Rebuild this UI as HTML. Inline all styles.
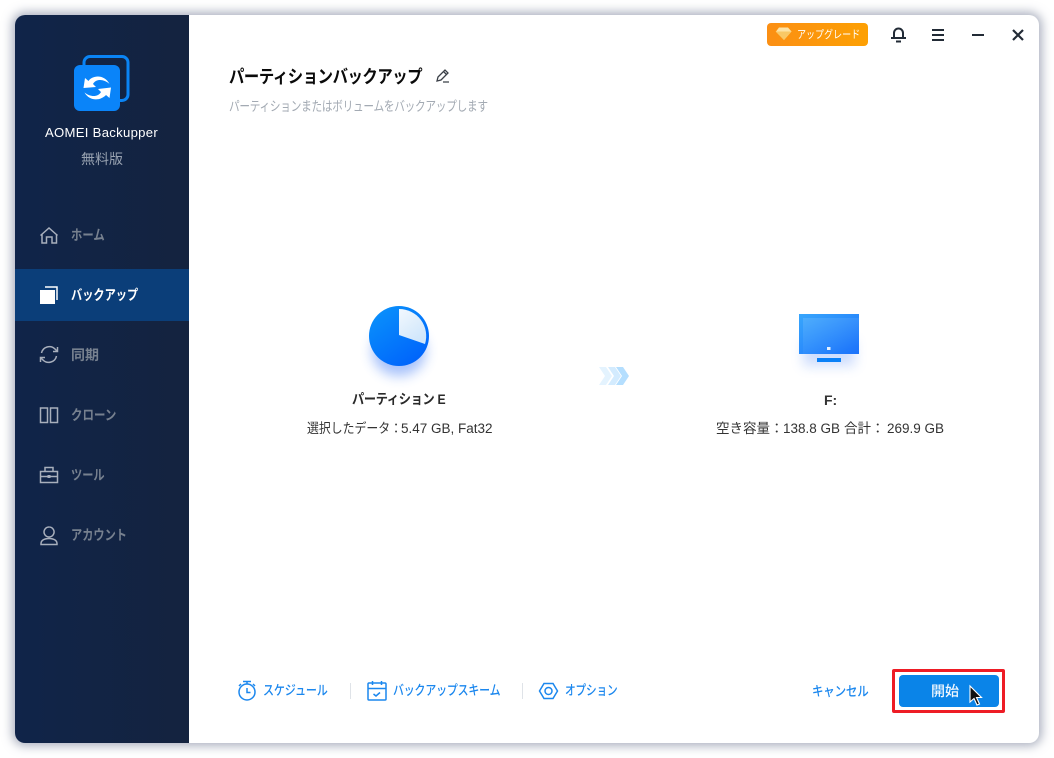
<!DOCTYPE html>
<html lang="ja"><head><meta charset="utf-8"><title>AOMEI Backupper</title>
<style>
html,body{margin:0;padding:0;width:1054px;height:758px;background:#fff;overflow:hidden;font-family:"Liberation Sans","Noto Sans CJK JP",sans-serif}
.t{position:absolute;white-space:nowrap;line-height:20px;height:20px;transform-origin:left center}
svg{position:absolute;overflow:visible}
#win{position:absolute;left:15px;top:15px;width:1024px;height:728px;background:#fff;border-radius:10px;box-shadow:0 0 10px 3px rgba(90,100,130,.5)}
#side{position:absolute;left:15px;top:15px;width:174px;height:728px;border-radius:10px 0 0 10px;background:linear-gradient(90deg,#102449,#14233f)}
.nav{font-size:14px;font-weight:700;color:#77818f;left:71px}
.blue{font-size:13.500px;font-weight:500;color:#1b87ee;letter-spacing:-.2px}
.d{font-size:13.500px;color:#333}
</style></head><body>
<div id="win"></div><div id="side"></div>

<!-- logo -->
<svg style="left:0;top:0" width="200" height="200" viewBox="0 0 200 200">
<rect x="84" y="56.500" width="44" height="44" rx="6" fill="none" stroke="#0a84f5" stroke-width="3"/>
<rect x="74" y="65" width="46" height="46" rx="6" fill="#0a84f9"/>
<path d="M83.500 88L85 78l3.500 3C92 75.500 104 73.500 109.500 84 104 79 96 78.500 93 84l3 3z" fill="#fff"/>
<path d="M111 87.500L109.500 98l-3.500-3C101 100.500 90 102 84.500 92.500 90 97 98 97.500 101 92l-3-3z" fill="#fff"/>
</svg>
<div class="t" style="left:45px;top:123px;font-size:13px;font-weight:500;color:#fff;letter-spacing:.28px;transform:scaleX(1.01)">AOMEI Backupper</div>
<div class="t" style="left:81px;top:149px;font-size:14px;color:#98a2b0">無料版</div>

<!-- nav -->
<div style="position:absolute;left:15px;top:269px;width:174px;height:52px;background:#0b3e79"></div>
<svg style="left:0;top:0" width="190" height="560" fill="none" stroke="#a8afbc" stroke-width="1.500">
<path d="M40.500 235.500L49 228l8.500 7.500M42 234v9h4.500v-6h5.500v6h4.500v-9"/>
<rect x="40" y="290" width="15" height="14" fill="#fff" stroke="none"/>
<path d="M45 287h12v13" stroke="#fff" stroke-width="1.500"/>
<path d="M41.500 353a8 8 0 0 1 13.500-4l2 2M56.500 356a8 8 0 0 1-13.500 4l-2-2"/>
<path d="M57.500 347v4.500H53M40.500 362v-4.500H45"/>
<path d="M40.500 408h7v14.500h-7zM50.500 408h7v14.500h-7z"/>
<path d="M40.500 471.500h17v11h-17zM45 471v-3.500h8v3.500M40.500 476.500h17"/>
<rect x="47.500" y="475" width="3" height="3" fill="#a8afbc" stroke="none"/>
<path d="M41 543.500c0-3 3-5 8-5s8 2 8 5v1H41zM49 527a5 5 0 1 0 .1 0"/>
</svg>
<div class="t nav" style="top:225px;transform:scaleX(.81)">ホーム</div>
<div class="t nav" style="top:285px;color:#fff;transform:scaleX(.8)">バックアップ</div>
<div class="t nav" style="top:345px">同期</div>
<div class="t nav" style="top:405px;transform:scaleX(.82)">クローン</div>
<div class="t nav" style="top:465px;transform:scaleX(.8)">ツール</div>
<div class="t nav" style="top:525px;transform:scaleX(.8)">アカウント</div>

<!-- top bar -->
<div style="position:absolute;left:767px;top:23px;width:101px;height:23px;border-radius:4px;background:linear-gradient(90deg,#fb8f14,#fda003)"></div>
<svg style="left:0;top:0" width="1054" height="60">
<path d="M779 27.500h9l3.500 4-7.500 8.500-8-8.500z" fill="#fde3a6"/><path d="M775.500 31.500h16l-7.500 8.500z" fill="#f9c866"/>
<g fill="none" stroke="#222b36" stroke-width="2">
<path d="M894 37.500V33a4.500 4.500 0 0 1 9 0v4.500M891 38h15M896 41.500h5"/>
<path d="M932 30h12M932 35h12M932 40h12"/>
<path d="M972 35h12"/>
<path d="M1013 30l10 10M1023 30l-10 10" stroke-width="2.200"/>
</g></svg>
<div class="t" style="left:797px;top:25px;font-size:11px;color:#fff;transform:scaleX(.82)">アップグレード</div>

<!-- title -->
<div class="t" style="left:229px;top:67px;font-size:18px;font-weight:700;color:#0a0a0a;letter-spacing:-.5px;transform:scaleX(.853)">パーティションバックアップ</div>
<svg style="left:0;top:0" width="460" height="90" fill="none" stroke="#3b4048" stroke-width="1.300">
<path d="M437 81l1-4 7-7 3 3-7 7zM443.500 71.500l3 3M443 82h6"/></svg>
<div class="t" style="left:229px;top:97px;font-size:13.500px;color:#a3aab3;letter-spacing:-.35px;transform:scaleX(.79)">パーティションまたはボリュームをバックアップします</div>

<!-- pie -->
<svg style="left:349px;top:296px" width="100" height="90" viewBox="349 296 100 90">
<defs>
<linearGradient id="a" x1="0" y1="0" x2=".7" y2="1"><stop offset="0" stop-color="#0b95fb"/><stop offset="1" stop-color="#0064fb"/></linearGradient>
<linearGradient id="b" x1="0" y1="0" x2=".6" y2="1"><stop offset="0" stop-color="#f2f8fe"/><stop offset="1" stop-color="#cfe6fb"/></linearGradient>
<linearGradient id="c" x1="0" y1="0" x2="1" y2="1"><stop offset="0" stop-color="#38a6fc"/><stop offset="1" stop-color="#1c72fb"/></linearGradient>
<linearGradient id="e" x1="0" y1="0" x2=".6" y2="1"><stop offset="0" stop-color="#fff" stop-opacity=".12"/><stop offset="1" stop-color="#fff" stop-opacity="0"/></linearGradient>
<filter id="f" x="-60%" y="-60%" width="220%" height="220%"><feGaussianBlur stdDeviation="6"/></filter>
</defs>
<ellipse cx="399" cy="351" rx="27" ry="25" fill="#3d78f5" opacity=".45" filter="url(#f)"/>
<circle cx="399" cy="336" r="30" fill="url(#a)"/>
<path d="M399 309a27 27 0 0 1 26 35l-26-9z" fill="url(#b)"/>
</svg>
<div class="t" style="left:352px;top:389px;font-size:14px;font-weight:700;color:#2a2a2a;letter-spacing:-.35px;transform:scaleX(.87)">パーティション E</div>
<div class="t d" style="left:307px;top:419px;transform:scaleX(.88)">選択したデータ：</div>
<div class="t d" style="left:401px;top:419px">5.47 GB, Fat32</div>

<!-- arrows -->
<svg style="left:0;top:360px" width="640" height="30">
<path d="M599 7h7l6 9-6 9h-7l6-9z" fill="#e4f3fe"/>
<path d="M608 7h7l6 9-6 9h-7l6-9z" fill="#d3ebfe"/>
<path d="M616 7h7l6 9-6 9h-7l6-9z" fill="#b4defe"/>
</svg>

<!-- monitor -->
<svg style="left:785px;top:300px" width="90" height="90" viewBox="785 300 90 90">
<rect x="803" y="340" width="52" height="26" fill="#3d78f5" opacity=".25" filter="url(#f)"/>
<rect x="799" y="314" width="60" height="40" fill="url(#c)"/>
<rect x="803" y="318" width="56" height="36" fill="url(#e)"/>
<rect x="827" y="347" width="3.500" height="3" fill="#e5f1fe"/>
<rect x="817" y="358" width="24" height="4" fill="#0a80f7"/>
</svg>
<div class="t" style="left:824px;top:390px;font-size:14px;font-weight:700;color:#333">F:</div>
<div class="t d" style="left:716px;top:419px">空き容量：</div>
<div class="t d" style="left:783px;top:419px">138.8 GB</div>
<div class="t d" style="left:844px;top:419px">合計：</div>
<div class="t d" style="left:887px;top:419px">269.9 GB</div>

<!-- bottom -->
<svg style="left:0;top:670px" width="600" height="40" fill="none" stroke="#1b87ee" stroke-width="1.500">
<g transform="translate(0 -670)">
<circle cx="247" cy="692" r="8"/><path d="M243 681.500h8M247 682v2M247 688v4.500h3.500M239 686l2-2M255 686l-2-2"/>
<rect x="368" y="683" width="18" height="17" rx="1"/><path d="M368 688.500h18M372.500 681v4M381.500 681v4M373.500 694l2.500 2 4-3.500"/>
<path d="M544 683.500h9l4.500 7.500-4.500 7.500h-9l-4.500-7.500z"/><circle cx="548.500" cy="691" r="3.500"/>
</g></svg>
<div style="position:absolute;left:350px;top:683px;width:1px;height:16px;background:#dfe3e8"></div>
<div style="position:absolute;left:522px;top:683px;width:1px;height:16px;background:#dfe3e8"></div>
<div class="t blue" style="left:263px;top:681px;transform:scaleX(.82)">スケジュール</div>
<div class="t blue" style="left:393px;top:681px;transform:scaleX(.81)">バックアップスキーム</div>
<div class="t blue" style="left:565px;top:681px;transform:scaleX(.79)">オプション</div>
<div class="t blue" style="left:812px;top:682px;transform:scaleX(.85)">キャンセル</div>

<div style="position:absolute;left:892px;top:669px;width:107px;height:38px;border:3px solid #ee1c25;border-radius:2px;background:#fff"></div>
<div style="position:absolute;left:899px;top:675px;width:100px;height:32px;border-radius:4px;background:#0a84e8"></div>
<div class="t" style="left:931px;top:681px;font-size:14px;font-weight:500;color:#f2f8fe">開始</div>
<svg style="left:0;top:0" width="1054" height="758">
<path d="M970 686v16l4-3.500 3 6.500 2.500-1-3-6.500h5z" fill="#111" stroke="#fff" stroke-width="1.100"/>
</svg>
</body></html>
